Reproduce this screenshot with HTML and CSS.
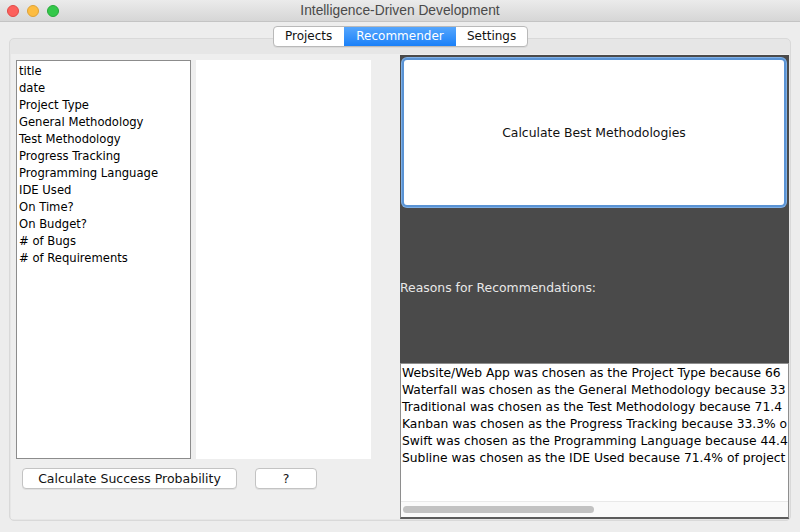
FILE: index.html
```html
<!DOCTYPE html>
<html>
<head>
<meta charset="utf-8">
<link rel="stylesheet" href="styles.css">
</head>
<body>
<div class="window">
  <div class="titlebar">
    <div class="lights">
      <span class="light red"></span>
      <span class="light yellow"></span>
      <span class="light green"></span>
    </div>
    <div class="title">Intelligence-Driven Development</div>
  </div>
  <div class="content">
    <div class="tabs">
      <div class="tab">Projects</div>
      <div class="tab active">Recommender</div>
      <div class="tab">Settings</div>
    </div>
    <div class="pane">
      <div class="panel">
        <div class="left">
          <div class="lists">
            <ul class="list">
              <li>title</li>
              <li>date</li>
              <li>Project Type</li>
              <li>General Methodology</li>
              <li>Test Methodology</li>
              <li>Progress Tracking</li>
              <li>Programming Language</li>
              <li>IDE Used</li>
              <li>On Time?</li>
              <li>On Budget?</li>
              <li># of Bugs</li>
              <li># of Requirements</li>
            </ul>
            <div class="list2"></div>
          </div>
          <div class="buttons">
            <button class="btn wide">Calculate Success Probability</button>
            <button class="btn help">?</button>
          </div>
        </div>
        <div class="right">
          <div class="dark">
            <button class="bigbtn">Calculate Best Methodologies</button>
            <div class="reasons">Reasons for Recommendations:</div>
          </div>
          <div class="textarea">
            <div class="lines">
              <div>Website/Web App was chosen as the Project Type because 66</div>
              <div>Waterfall was chosen as the General Methodology because 33</div>
              <div>Traditional was chosen as the Test Methodology because 71.4</div>
              <div>Kanban was chosen as the Progress Tracking because 33.3% o</div>
              <div>Swift was chosen as the Programming Language because 44.4</div>
              <div>Subline was chosen as the IDE Used because 71.4% of project</div>
            </div>
            <div class="hscroll"><div class="thumb"></div></div>
          </div>
        </div>
      </div>
    </div>
  </div>
</div>
</body>
</html>
```

FILE: styles.css
```css
* { box-sizing: border-box; }
html, body { margin: 0; padding: 0; }
body {
  width: 800px;
  height: 532px;
  overflow: hidden;
  background: #ececec;
  font-family: "DejaVu Sans", sans-serif;
}
.window {
  width: 800px;
  height: 532px;
  display: flex;
  flex-direction: column;
  background: #ededed;
}
.titlebar {
  height: 22px;
  flex: none;
  display: flex;
  align-items: center;
  background: linear-gradient(#ebebeb, #d6d6d6);
  border-bottom: 1px solid #c4c4c4;
  position: relative;
}
.lights {
  display: flex;
  gap: 8px;
  padding-left: 7px;
}
.light {
  width: 12px;
  height: 12px;
  border-radius: 50%;
  display: block;
}
.red { background: #fc605c; border: 1px solid #e04a46; }
.yellow { background: #fdbc40; border: 1px solid #dea236; }
.green { background: #34c84a; border: 1px solid #27a93a; }
.title {
  position: absolute;
  left: 0;
  right: 0;
  top: 0;
  height: 21px;
  line-height: 22px;
  text-align: center;
  font-family: "Liberation Sans", sans-serif;
  font-size: 13.8px;
  color: #4a4a4a;
}
.content {
  flex: 1;
  display: flex;
  flex-direction: column;
  padding: 4px 9px 11px 9px;
}
.tabs {
  align-self: center;
  display: flex;
  height: 21px;
  background: #fff;
  border: 1px solid #b9b9b9;
  border-radius: 4px;
  position: relative;
  z-index: 1;
  overflow: hidden;
  box-shadow: 0 1px 0 rgba(0,0,0,0.05);
  margin-left: 1px;
}
.tab {
  font-size: 12px;
  line-height: 19px;
  color: #111;
  padding: 0 11px;
  border-left: 1px solid #c9c9c9;
}
.tab:first-child { border-left: none; width: 70px; }
.tab.active {
  background: linear-gradient(#55a6fd, #1a80f8);
  color: #fff;
  border-left: none;
  width: 112px;
  text-align: center;
}
.tab.active + .tab { border-left: none; width: 71px; }
.pane {
  flex: 1;
  margin-top: -9px;
  background: #e6e6e6;
  border: 1px solid #d9d9d9;
  border-radius: 5px;
  padding: 15px 1px 1px 1px;
  display: flex;
}
.panel {
  flex: 1;
  background: #eeeeee;
  display: flex;
}
.left {
  width: 389px;
  padding: 6px 0 0 5px;
  display: flex;
  flex-direction: column;
}
.lists {
  display: flex;
  gap: 5px;
  height: 399px;
}
.list {
  margin: 0;
  padding: 2px 0 0 2px;
  list-style: none;
  width: 175px;
  background: #fff;
  border: 1px solid #8c8c8c;
  font-size: 11.6px;
  color: #000;
}
.list li {
  height: 17px;
  line-height: 17px;
  white-space: nowrap;
}
.list2 {
  width: 175px;
  background: #fff;
}
.buttons {
  display: flex;
  gap: 18px;
  margin-top: 9px;
  padding-left: 6px;
}
.btn {
  height: 21px;
  background: #fff;
  border: 1px solid #c3c3c3;
  border-radius: 4px;
  font-family: "DejaVu Sans", sans-serif;
  font-size: 12.5px;
  color: #111;
  padding: 0;
  box-shadow: 0 1px 0 rgba(0,0,0,0.06);
}
.wide { width: 215px; }
.help { width: 62px; }
.right {
  width: 389px;
  display: flex;
  flex-direction: column;
  padding-top: 1px;
}
.dark {
  height: 308px;
  background: #4a4a4a;
  display: flex;
  flex-direction: column;
  padding: 3px 3px 0 2px;
}
.bigbtn {
  height: 149px;
  background: #fff;
  border: 2px solid #5a93d4;
  border-radius: 5px;
  box-shadow: 0 0 0 1px #7fb0e6;
  font-family: "DejaVu Sans", sans-serif;
  font-size: 12.4px;
  color: #111;
  padding: 0;
}
.reasons {
  flex: 1;
  display: flex;
  align-items: center;
  margin-left: -2px;
  padding-top: 5px;
  color: #e8e8e8;
  font-size: 12.4px;
}
.textarea {
  flex: 1;
  background: #fff;
  border: 1px solid #8e8e8e;
  border-bottom: 2px solid #5c5c5c;
  display: flex;
  flex-direction: column;
  overflow: hidden;
}
.lines {
  flex: 1;
  padding: 1px 0 0 1px;
  font-size: 12.3px;
  color: #000;
  white-space: nowrap;
  overflow: hidden;
}
.lines div {
  height: 17px;
  line-height: 17px;
}
.hscroll {
  height: 16px;
  background: #fafafa;
  border-top: 1px solid #e9e9e9;
  padding: 4px 2px;
}
.thumb {
  width: 191px;
  height: 7px;
  border-radius: 4px;
  background: #c2c2c2;
}
```
